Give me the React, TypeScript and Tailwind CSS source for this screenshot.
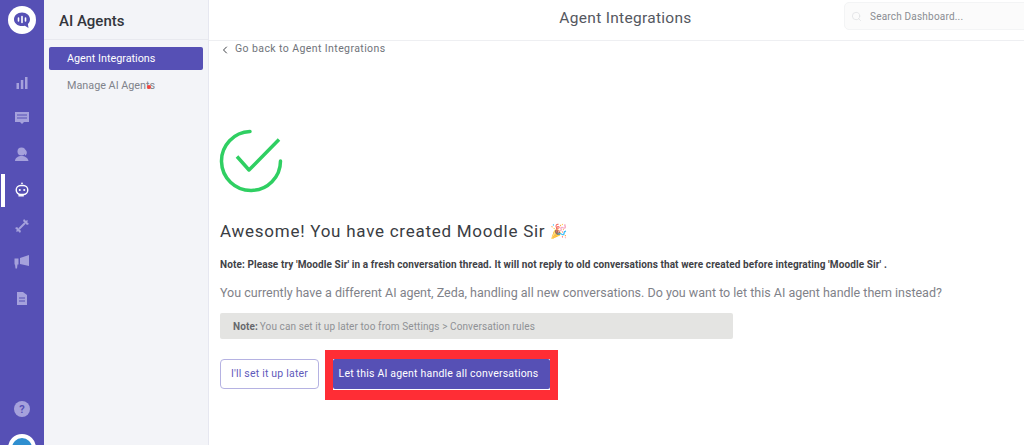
import { ChevronLeft, Search } from 'lucide-react';

const railIcon = 'w-[16px] h-[16px] text-[#a5a1dc]';

function LogoIcon() {
  return (
    <svg viewBox="0 0 28 28" className="w-[28px] h-[28px]">
      <circle cx="14" cy="14" r="14" fill="#fff" />
      <path d="M14 6.500c-4.600 0-8 3-8 6.800s3.400 6.800 8 6.800c1 0 2-.1 2.900-.4l3.600 2.300-.6-3.900c1.300-1.200 2.100-3 2.100-4.800 0-3.800-3.400-6.800-8-6.800z" fill="#5650b5" />
      <path d="M10.500 12v3M14 10.500v6M17.500 12v3" stroke="#fff" strokeWidth="1.600" strokeLinecap="round" />
    </svg>
  );
}

function RailIcons() {
  return (
    <div className="flex flex-col items-center gap-[20px] mt-[40px]">
      <svg viewBox="0 0 16 16" className={railIcon} fill="currentColor">
        <rect x="2.500" y="9" width="2.500" height="6" />
        <rect x="6.800" y="6" width="2.500" height="9" />
        <rect x="11" y="3" width="2.500" height="12" />
      </svg>
      <svg viewBox="0 0 16 16" className={railIcon} fill="currentColor">
        <path d="M1 2h14v10h-5l-2 2-2-2H1z" />
        <path d="M3 5h10M3 8h10" stroke="#5650b5" strokeWidth="1" />
      </svg>
      <svg viewBox="0 0 16 16" className={railIcon} fill="currentColor">
        <circle cx="7.500" cy="5.500" r="4" />
        <path d="M11 3.500a4 4 0 0 1 1 5.500l-1 .5z" />
        <path d="M1 15c0-3 3-5 6.500-5s6.500 2 7 5z" />
      </svg>
      <svg viewBox="0 0 16 18" className="w-[16px] h-[16px] text-white" fill="none" stroke="currentColor">
        <circle cx="8" cy="1.500" r="1" fill="currentColor" stroke="none" />
        <rect x="1.500" y="4" width="13" height="10" rx="5" strokeWidth="1.600" />
        <circle cx="5.500" cy="9" r="1.200" fill="currentColor" stroke="none" />
        <circle cx="10.500" cy="9" r="1.200" fill="currentColor" stroke="none" />
        <path d="M4 15.500h6" strokeWidth="1.600" />
      </svg>
      <svg viewBox="0 0 16 16" className={railIcon} fill="currentColor">
        <path d="M10 1l2 2 1-1 1 1-1 1 2 2-2 1-4-4z" />
        <path d="M1 10l2-1 4 4-1 2-2-2-1 1-1-1 1-1z" />
        <path d="M5 11l6-6" stroke="currentColor" strokeWidth="2" />
      </svg>
      <svg viewBox="0 0 16 16" className={railIcon} fill="currentColor">
        <path d="M6 4l9-3v11l-9-2z" />
        <path d="M0.500 4.500h4v6H3.500l-.5 4H1.500l-.5-4H0.500z" />
      </svg>
      <svg viewBox="0 0 16 16" className={railIcon} fill="currentColor">
        <path d="M3 2h6l4 3v10H3z" />
        <path d="M5 8h6M5 11h6" stroke="#5650b5" strokeWidth="1" />
      </svg>
    </div>
  );
}

function Rail() {
  return (
    <aside className="w-[44px] h-full bg-[#5650b5] flex flex-col items-center pt-[6px] relative overflow-hidden shrink-0">
      <LogoIcon />
      <RailIcons />
      <div className="absolute left-[1px] top-[174px] w-[4px] h-[33px] bg-white" />
      <svg viewBox="0 0 16 16" className="absolute left-[14px] top-[401px] w-[16px] h-[16px] text-[#a5a1dc]">
        <circle cx="8" cy="8" r="8" fill="currentColor" />
        <text x="8" y="12" textAnchor="middle" fontSize="11" fontWeight="700" fill="#5650b5" fontFamily="Roboto, sans-serif">?</text>
      </svg>
      <div className="absolute left-[8px] top-[434px] w-[28px] h-[28px] rounded-full bg-[#2f8fd0] border-[4px] border-white" />
    </aside>
  );
}

function SubNav() {
  return (
    <nav className="w-[165px] h-full bg-[#f3f4f8] border-r border-[#e6e7f0] shrink-0">
      <div className="h-[40px] border-b border-[#e8e9ef] pl-[15px] pt-[3px] flex items-center text-[15px] font-medium text-[#33363c]">
        AI Agents
      </div>
      <div className="px-[5px] pt-[7px]">
        <div className="h-[23px] w-[154px] bg-[#5650b5] rounded-[2px] pl-[18px] pt-[1px] flex items-center text-[10.800px] text-white">
          Agent Integrations
        </div>
        <div className="relative h-[23px] mt-[3px] pl-[18px] pt-[3px] flex items-center text-[10.800px] text-[#80838b]">
          Manage AI Agents
          <span className="absolute left-[98px] top-[12px] w-[4px] h-[4px] rounded-full bg-[#f5433f]" />
        </div>
      </div>
    </nav>
  );
}

export default function App() {
  return (
    <div className="w-[1024px] h-[445px] flex overflow-hidden bg-white font-['Roboto',sans-serif]">
      <Rail />
      <SubNav />
      <main className="flex-1 min-w-0 flex flex-col">
        <header className="h-[41px] border-b border-[#eeeff2] relative flex items-center justify-center shrink-0">
          <h1 className="text-[15.500px] tracking-[0.3px] text-[#55585f] ml-[18px] -mt-[2px]">Agent Integrations</h1>
          <div className="absolute left-[635px] top-[2px] w-[190px] h-[28px] rounded-[5px] border border-[#f3f4f5] bg-[#fbfbfb] flex items-center pl-[6px] gap-[8px]">
            <Search className="w-[11px] h-[11px] text-[#dcdde0]" strokeWidth={1.500} />
            <span className="text-[10px] tracking-[0.2px] text-[#8a8d92]">Search Dashboard...</span>
          </div>
        </header>
        <div className="pl-[11px] flex flex-col items-start">
          <div className="flex items-center h-[14px] mt-[1px] text-[10.500px] tracking-[0.41px] text-[#70737a]">
            <ChevronLeft className="w-[12px] h-[12px] text-[#3f4247] -ml-[1px] mr-[4px] mt-[1px]" strokeWidth={2} />
            Go back to Agent Integrations
          </div>
          <svg viewBox="0 0 64 64" className="w-[64px] h-[64px] mt-[73px] -ml-[1px]" fill="none" stroke="#2fcf62" strokeWidth="3.500" strokeLinecap="round" strokeLinejoin="round">
            <path d="M31 2.500A29.500 29.500 0 1 0 61.500 32" />
            <path d="M18 27.500 L30 41 L60 10.500" strokeLinecap="butt" />
          </svg>
          <h2 className="mt-[26px] text-[17px] leading-[24px] tracking-[0.74px] text-[#3a3d43] flex items-center">
            Awesome! You have created Moodle Sir
            <span className="ml-[5px] text-[14px] opacity-75 font-['Noto_Color_Emoji','DejaVu_Sans',sans-serif]">🎉</span>
          </h2>
          <p className="mt-[15px] text-[10px] leading-[14px] tracking-[0.1px] font-bold text-[#3f4247]">
            Note: Please try 'Moodle Sir' in a fresh conversation thread. It will not reply to old conversations that were created before integrating 'Moodle Sir' .
          </p>
          <p className="mt-[12px] text-[12.500px] leading-[18px] text-[#7f8289]">
            You currently have a different AI agent, Zeda, handling all new conversations. Do you want to let this AI agent handle them instead?
          </p>
          <div className="mt-[11px] w-[513px] h-[26px] bg-[#e4e4e2] rounded-[2px] pl-[13px] flex items-center text-[10px] tracking-[0.1px] text-[#8f9195]">
            <span className="font-bold text-[#66686c] mr-[2px]">Note:</span> You can set it up later too from Settings &gt; Conversation rules
          </div>
          <div className="mt-[11px] flex items-start gap-[6px]">
            <button className="mt-[9px] w-[99px] h-[30px] rounded-[4px] border border-[#b5b2e2] bg-white text-[10.500px] tracking-[0.2px] text-[#5f5abb]">
              I'll set it up later
            </button>
            <div className="border-x-[8px] border-t-[9px] border-b-[10px] border-[#ff2d35] bg-white pb-[1px]">
              <button className="block w-[217px] h-[30px] rounded-[2px] bg-[#5650b5] pr-[6px] text-[10.500px] tracking-[0.2px] text-white">
                Let this AI agent handle all conversations
              </button>
            </div>
          </div>
        </div>
      </main>
    </div>
  );
}
